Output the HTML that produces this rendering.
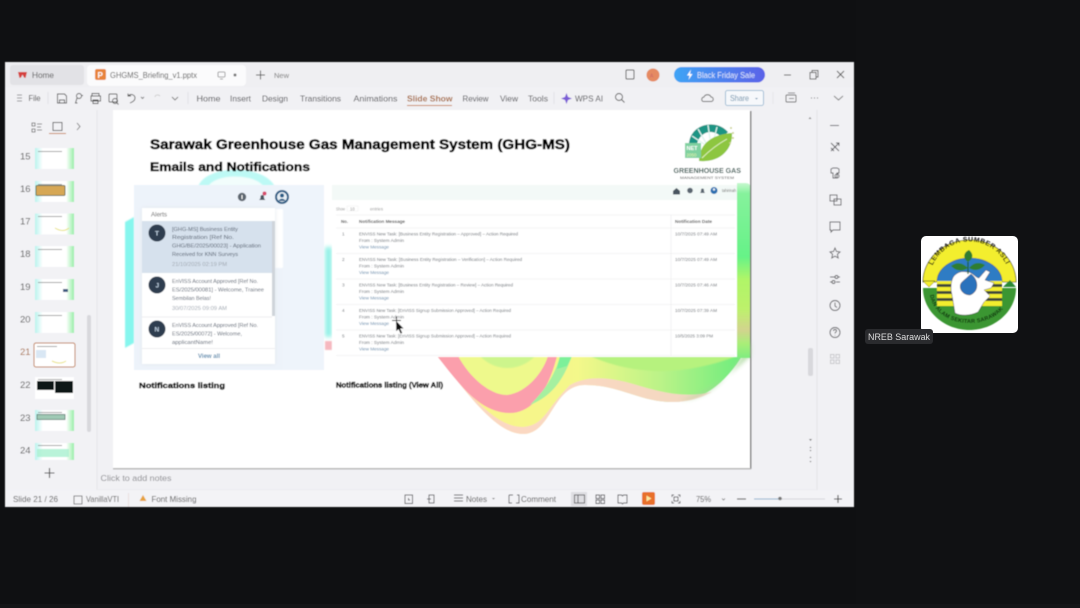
<!DOCTYPE html>
<html><head><meta charset="utf-8"><title>GHGMS Briefing</title>
<style>html,body{margin:0;padding:0;background:#0f1012;overflow:hidden}svg{display:block}text{font-family:"Liberation Sans",sans-serif}</style></head>
<body>
<svg width="1080" height="608" viewBox="0 0 1080 608" xmlns="http://www.w3.org/2000/svg">
<defs>
<filter id="b" x="-5%" y="-5%" width="110%" height="110%"><feGaussianBlur stdDeviation="0.42"/></filter>
<filter id="b2" x="-10%" y="-10%" width="120%" height="120%"><feGaussianBlur stdDeviation="2"/></filter>
<linearGradient id="sale" x1="0" x2="1"><stop offset="0" stop-color="#3fa4f5"/><stop offset="1" stop-color="#5b62e8"/></linearGradient>
<linearGradient id="wave" x1="0" x2="1"><stop offset="0" stop-color="#fbf28c"/><stop offset=".45" stop-color="#f4f88a"/><stop offset=".72" stop-color="#b9f388"/><stop offset="1" stop-color="#66ec7c"/></linearGradient>
<linearGradient id="strip" x1="0" x2="0" y1="0" y2="1"><stop offset="0" stop-color="#c8f8d0"/><stop offset=".06" stop-color="#86f29c"/><stop offset=".42" stop-color="#66f388"/><stop offset=".55" stop-color="#b0f568"/><stop offset=".72" stop-color="#bdf16c"/><stop offset=".84" stop-color="#d2d48e"/><stop offset=".92" stop-color="#a8ee78"/><stop offset="1" stop-color="#7fec80"/></linearGradient>
<linearGradient id="th" x1="0" x2="1"><stop offset="0" stop-color="#b9f3ee"/><stop offset=".2" stop-color="#fff"/><stop offset=".8" stop-color="#fff"/><stop offset="1" stop-color="#98eea8"/></linearGradient>
<path id="topArc" d="M929 282 A40.500 40.500 0 0 1 1010 282"/>
<path id="botArc" d="M930 293 A39.500 30 0 0 0 1009 293"/>
</defs>
<rect width="1080" height="608" fill="#0f1012"/>
<rect x="856" y="0" width="224" height="608" fill="#101113"/>
<rect x="0" y="604" width="1080" height="4" fill="#141517"/>
<g filter="url(#b)">
<!-- window -->
<rect x="5" y="62" width="849" height="445" fill="#f1f1f4"/>
<rect x="5" y="62" width="849" height="25" fill="#efeff2"/>
<rect x="10" y="65" width="74" height="20" rx="3" fill="#e2e2e6"/>
<rect x="87" y="65" width="159" height="21" rx="4" fill="#fbfbfc"/>
<path d="M18 72h9l-1.500 6-1.500-.5-1.500-3-1.500 3-1.500.5z" fill="#d5413c"/>
<text x="32" y="78" font-size="8.500" fill="#555" textLength="22" lengthAdjust="spacingAndGlyphs">Home</text>
<rect x="95" y="69" width="11" height="11" rx="2" fill="#e8843a"/>
<text x="97.500" y="78" font-size="8" fill="#fff" font-weight="bold">P</text>
<text x="110" y="78" font-size="8.500" fill="#555" textLength="87" lengthAdjust="spacingAndGlyphs">GHGMS_Briefing_v1.pptx</text>
<rect x="218" y="72" width="7" height="5" rx="1" fill="none" stroke="#888" stroke-width=".8"/><path d="M220 79h3" stroke="#888" stroke-width=".8"/>
<circle cx="235" cy="75" r="1.500" fill="#777"/>
<path d="M256 75h9M260.500 70.500v9" stroke="#555" stroke-width="1"/>
<text x="274" y="78" font-size="7.500" fill="#777" textLength="15" lengthAdjust="spacingAndGlyphs">New</text>
<rect x="626" y="70" width="8" height="9" rx="1" fill="none" stroke="#555" stroke-width="1"/>
<circle cx="653" cy="75" r="6.500" fill="#e58a62"/>
<text x="650" y="77.500" font-size="5" fill="#c66">A</text>
<rect x="674" y="67" width="91" height="15.500" rx="7.700" fill="url(#sale)"/>
<path d="M691 69.500l-4 6h2.500l-1 4.500 4-6h-2.500z" fill="#fff"/>
<text x="697" y="78" font-size="8" fill="#dfe7fb" textLength="58" lengthAdjust="spacingAndGlyphs">Black Friday Sale</text>
<path d="M784 75h7" stroke="#555" stroke-width="1"/>
<rect x="810" y="72.500" width="6" height="6.500" fill="none" stroke="#555" stroke-width=".9"/><path d="M812 72.500v-2h6v6.500h-2" fill="none" stroke="#555" stroke-width=".9"/>
<path d="M837 71l7 7M844 71l-7 7" stroke="#555" stroke-width=".9"/>
<!-- ribbon -->
<path d="M17 95h5M17 98h5M17 101h5" stroke="#777" stroke-width=".8"/>
<text x="28.500" y="101" font-size="8" fill="#444" textLength="12" lengthAdjust="spacingAndGlyphs">File</text>
<path d="M48 92v12" stroke="#e2e2e5"/>
<g fill="none" stroke="#555" stroke-width=".9">
<path d="M57.500 94h7l2 2v7h-9zM59.500 103v-3h5v3"/>
<circle cx="79" cy="96" r="2.500"/><path d="M77 98l-1.500 5h2M81 95.500h2"/>
<path d="M92 96v-2.500h7v2.500M91 96h9.500v5H91zM93 100h5v3.500h-5z"/>
<rect x="109" y="94" width="8" height="8" rx="1"/><circle cx="115" cy="101" r="2.500"/><path d="M117 103l1.500 1.500"/>
<path d="M128 96c3-3 7-1 7 2s-3 4-5 5M128 93.500V96h3"/>
<path d="M141 97l1.500 1.500L144 97" stroke="#777"/>
<path d="M160 96c-2-2-5-1-5 1" stroke="#ccc"/>
<path d="M172 97l3 3 3-3" stroke="#777"/>
</g>
<path d="M188 92v12" stroke="#e2e2e5"/>
<g font-size="8.700" fill="#4b4b4f">
<text x="196.500" y="101.500" textLength="24" lengthAdjust="spacingAndGlyphs">Home</text>
<text x="230" y="101.500" textLength="21" lengthAdjust="spacingAndGlyphs">Insert</text>
<text x="262" y="101.500" textLength="26" lengthAdjust="spacingAndGlyphs">Design</text>
<text x="300" y="101.500" textLength="41" lengthAdjust="spacingAndGlyphs">Transitions</text>
<text x="353.500" y="101.500" textLength="44" lengthAdjust="spacingAndGlyphs">Animations</text>
<text x="407" y="101.500" textLength="45.500" lengthAdjust="spacingAndGlyphs" font-weight="bold" fill="#a86a3c">Slide Show</text>
<text x="462.500" y="101.500" textLength="26" lengthAdjust="spacingAndGlyphs">Review</text>
<text x="500" y="101.500" textLength="18" lengthAdjust="spacingAndGlyphs">View</text>
<text x="528" y="101.500" textLength="20" lengthAdjust="spacingAndGlyphs">Tools</text>
<text x="575" y="101.500" textLength="28" lengthAdjust="spacingAndGlyphs">WPS AI</text>
</g>
<rect x="407" y="105" width="45" height="1" fill="#c98554"/>
<path d="M554 92v12" stroke="#e2e2e5"/>
<path d="M566.500 93l1.500 4 4 1.500-4 1.500-1.500 4-1.500-4-4-1.500 4-1.500z" fill="#7a5bd6"/>
<circle cx="619" cy="97" r="3.500" fill="none" stroke="#555" stroke-width=".9"/><path d="M621.500 99.500l3 3" stroke="#555" stroke-width=".9"/>
<path d="M704 101.500h7c3 0 3-4.500 0-4.500-1-3-6-3-7 0-3 .5-3 4.500 0 4.500z" fill="none" stroke="#666" stroke-width=".9"/>
<rect x="725.500" y="90.500" width="38" height="15" rx="2" fill="#f6f8fb" stroke="#8ab0cc" stroke-width=".8"/>
<text x="730" y="101" font-size="8" fill="#6f93ad" textLength="19" lengthAdjust="spacingAndGlyphs">Share</text>
<path d="M755 98h3l-1.500 1.500z" fill="#6f93ad"/>
<path d="M773 92v12" stroke="#e6e6e9"/>
<rect x="786" y="95" width="10" height="7" rx="1" fill="none" stroke="#666" stroke-width=".9"/><path d="M788 93h7M789 98.500h5" stroke="#666" stroke-width=".8"/>
<path d="M811 98h1M814 98h1M817 98h1" stroke="#555" stroke-width="1"/>
<path d="M834 96l4.500 4 4.500-4" fill="none" stroke="#777" stroke-width=".9"/>
<!-- left pane -->
<rect x="5" y="110" width="92" height="380" fill="#f2f2f5"/>
<path d="M97 110v380" stroke="#e6e6e9"/>
<g fill="none" stroke="#666" stroke-width=".8"><path d="M32 123h3v3h-3zM32 129h3v3h-3zM37 124h5M37 127h4M37 130h5"/></g>
<rect x="53" y="122.500" width="9" height="8" fill="none" stroke="#555" stroke-width=".9"/>
<rect x="49" y="133" width="17" height="1" fill="#c98554"/>
<path d="M77 123l3 3.500-3 3.500" fill="none" stroke="#777" stroke-width=".9"/>
<g font-size="9.500" fill="#555">
<text x="20" y="159.500">15</text><text x="20" y="192">16</text><text x="20" y="224.500">17</text><text x="20" y="257">18</text><text x="20" y="290">19</text><text x="20" y="322.500">20</text><text x="20" y="355" fill="#a86a3c">21</text><text x="20" y="388">22</text><text x="20" y="421">23</text><text x="20" y="453.500">24</text>
</g>
<g>
<rect x="35" y="148" width="39" height="21" fill="url(#th)"/>
<rect x="35" y="181" width="39" height="21" fill="url(#th)"/><rect x="36" y="185.500" width="29" height="10" rx="1" fill="#d6a754" stroke="#4a5a48" stroke-width=".8"/>
<rect x="35" y="213.500" width="39" height="21" fill="url(#th)"/><path d="M55 228q8 5 14 0" stroke="#e8e27a" fill="none"/>
<rect x="35" y="246" width="39" height="21" fill="url(#th)"/>
<rect x="35" y="279" width="39" height="21" fill="url(#th)"/><rect x="63" y="289" width="5" height="3" fill="#3c5a80"/>
<rect x="35" y="312" width="39" height="21" fill="url(#th)"/>
<rect x="34" y="343" width="41" height="24" rx="2" fill="#fff" stroke="#c07a48" stroke-width="1"/><rect x="36" y="350" width="10" height="8" fill="#d9e7f4"/><path d="M52 361q8 4 14 0" stroke="#e8e27a" fill="none"/>
<rect x="35" y="377" width="39" height="22" fill="#fff"/><rect x="37" y="381" width="17" height="9" fill="#0c1416"/><rect x="55" y="381" width="18" height="12" fill="#0c1416"/>
<rect x="35" y="410" width="39" height="21" fill="url(#th)"/><rect x="37" y="414.500" width="28" height="5" fill="#9fc9b4" stroke="#4a6a5e" stroke-width=".7"/>
<rect x="35" y="443" width="39" height="17" fill="url(#th)"/><rect x="37" y="449" width="32" height="8" fill="#a8f0d0" opacity=".8"/>
</g>
<g fill="#333" font-size="6" opacity=".45"><rect x="38" y="151" width="24" height="1"/><rect x="38" y="184" width="24" height="1"/><rect x="38" y="216" width="24" height="1"/><rect x="38" y="249" width="24" height="1"/><rect x="38" y="282" width="24" height="1"/><rect x="38" y="315" width="24" height="1"/><rect x="37" y="346" width="20" height="1"/><rect x="38" y="379" width="24" height="1"/><rect x="38" y="412" width="24" height="1"/><rect x="38" y="445" width="24" height="1"/></g>
<rect x="87" y="315" width="4" height="117" rx="2" fill="#d8d8dc"/>
<path d="M44.500 473h10M49.500 468v10" stroke="#444" stroke-width="1.100"/>
<!-- right -->
<path d="M817 110v380" stroke="#e3e3e7"/>
<path d="M810 117l1.500 2h-3z" fill="#888"/>
<rect x="808" y="348" width="5" height="28" rx="2" fill="#d8d8dc"/>
<path d="M809 439h3l-1.500 2zM809.500 448l1-1.500 1 1.500zM809.500 450l1 1.500 1-1.500zM809.500 458l1-1.500 1 1.500zM809.500 461l1 1.500 1-1.500z" fill="#777"/>
<g fill="none" stroke="#5a5a5e" stroke-width=".9">
<path d="M830 125.500h9"/>
<path d="M831 143l8 8M839 143l-8 8M836 143h3v3M831 148l3 3"/>
<path d="M831 169l2-1h4l2 1v4h-2v5h-4v-5h-2z"/><circle cx="837" cy="176" r="2"/>
<rect x="830" y="195" width="7" height="6"/><rect x="834" y="199" width="7" height="6"/>
<path d="M830 222h10v8h-7l-2 2v-2h-1z"/>
<path d="M835 248l1.500 3.500 3.500.4-2.600 2.400.8 3.700-3.200-1.900-3.200 1.900.8-3.700-2.600-2.400 3.500-.4z"/>
<path d="M830 277h5M838 277h2M830 282h2M836 282h4"/><circle cx="836.500" cy="277" r="1.500"/><circle cx="833.500" cy="282" r="1.500"/>
<circle cx="835" cy="305.500" r="5"/><path d="M835 302.500v3.500l2 1.500"/>
<circle cx="835" cy="332.500" r="5"/><path d="M833.500 331c0-2 3-2 3 0 0 1-1.500 1-1.500 2.500M835 335v.5"/>
<g stroke="#c5c5c9"><rect x="830.500" y="354.500" width="3.500" height="3.500"/><rect x="836" y="354.500" width="3.500" height="3.500"/><rect x="830.500" y="360" width="3.500" height="3.500"/><rect x="836" y="360" width="3.500" height="3.500"/></g>
</g>
<!-- notes -->
<text x="100.500" y="481" font-size="8.700" fill="#8a8a8e" textLength="71" lengthAdjust="spacingAndGlyphs">Click to add notes</text>
<path d="M97 490h720" stroke="#e8e8eb"/>
<!-- status -->
<rect x="5" y="490" width="849" height="17" fill="#f3f3f6"/>
<g font-size="8.500" fill="#555">
<text x="13" y="502" textLength="45" lengthAdjust="spacingAndGlyphs">Slide 21 / 26</text>
<text x="86" y="502" textLength="33" lengthAdjust="spacingAndGlyphs">VanillaVTI</text>
<text x="151.500" y="502" textLength="45" lengthAdjust="spacingAndGlyphs">Font Missing</text>
<text x="466" y="502" textLength="21" lengthAdjust="spacingAndGlyphs">Notes</text>
<text x="521" y="502" textLength="35" lengthAdjust="spacingAndGlyphs">Comment</text>
<text x="696" y="502" textLength="15" lengthAdjust="spacingAndGlyphs">75%</text>
</g>
<path d="M74 496h8v8h-8z" fill="none" stroke="#666" stroke-width=".8"/>
<path d="M128.500 493v14" stroke="#eadfdf"/>
<path d="M143 495l3.500 6h-7z" fill="#e6a23c"/>
<g fill="none" stroke="#5a5a5e" stroke-width=".9">
<rect x="405" y="495" width="7.500" height="8.500"/><path d="M408.500 498v2h1.500"/>
<rect x="429" y="495" width="5" height="8"/><path d="M427 499h4"/>
<path d="M454 495h9M454 498h9M454 501h9"/>
<path d="M509 495h4M509 495v8h3M516 503h3v-8h-2"/>
<path d="M596 495h3.500v3.500H596zM601 495h3.500v3.500H601zM596 500h3.500v3.500H596zM601 500h3.500v3.500H601z"/>
<path d="M618 495h3.500l1 1 1-1h3.500v8h-3.500l-1 1-1-1H618z"/>
<path d="M672 497v-2h2M678 495h2v2M680 501v2h-2M674 503h-2v-2"/><rect x="674" y="497" width="4" height="4"/>
</g>
<rect x="571" y="492" width="16" height="14" fill="#dedee2"/>
<rect x="574.500" y="495" width="10" height="8" fill="none" stroke="#5a5a5e" stroke-width=".9"/><path d="M578 495v8" stroke="#5a5a5e" stroke-width=".9"/>
<path d="M492 498h3l-1.500 1.500z" fill="#777"/>
<path d="M722 498.500l1.500 1.500 1.500-1.500" fill="none" stroke="#777" stroke-width=".8"/>
<rect x="642" y="492" width="13" height="13" rx="2" fill="#e8702c"/>
<path d="M646.500 495.500l5 3-5 3z" fill="#fbe9a0"/>
<path d="M737 499h9" stroke="#555" stroke-width="1.100"/>
<path d="M754 499h26" stroke="#8fb3cf" stroke-width="1"/><path d="M780 499h45" stroke="#d5d5d9" stroke-width="1"/>
<circle cx="780" cy="498.500" r="1.800" fill="#777"/>
<path d="M834 499h8M838 495v8" stroke="#444" stroke-width="1.100"/>
<!-- slide -->
<rect x="750" y="111" width="1.500" height="358" fill="#7d7d7d"/>
<rect x="113" y="468" width="638" height="1.500" fill="#b8b8b8"/>
<rect x="113" y="110" width="637" height="358" fill="#fff"/>
<!-- background decor -->
<path d="M198 187C205 164 265 164 275 187z" fill="#bdf9f5" filter="url(#b)"/>
<path d="M208 187C214 173 256 173 264 187z" fill="#f2fdfc" filter="url(#b)"/>
<path d="M134 217l-9 5v126l9-5z" fill="#86f6ee" filter="url(#b)"/>
<rect x="325" y="247" width="7" height="90" fill="#8ff0e6" filter="url(#b2)"/>
<rect x="325" y="341" width="7" height="9" fill="#f6b8bf" filter="url(#b)"/>
<!-- waves -->
<path d="M437 355C465 390 495 434 523 434 552 434 552 385 585 385 620 385 640 402 672 402 710 402 735 372 750 342V355z" fill="url(#wave)"/>
<path d="M437 355C465 390 495 434 523 434 552 434 552 385 585 385 620 385 640 402 672 402 690 402 700 398 712 392 690 397 670 395 640 386 615 378 590 374 570 385 545 410 545 425 523 427 495 427 470 395 437 355z" fill="#fbd5c8" opacity=".9"/>
<path d="M437 356C460 385 480 413 510 413 535 413 550 385 557 356z" fill="#fb9fac"/>
<path d="M458 356C470 378 490 395 507 395 525 393 542 375 548 356z" fill="#eef98c"/>
<path d="M480 356C495 372 520 372 535 356z" fill="#cdf58c" filter="url(#b)"/>
<path d="M530 405C555 395 565 375 572 356H560C555 375 545 390 530 405z" fill="#a5f0a0"/>
<path d="M590 356C640 378 690 374 737 356z" fill="#b6f27e" filter="url(#b)"/>
<path d="M680 400C710 400 735 372 750 342V356C730 375 705 395 680 400z" fill="#a6d596" opacity=".8" filter="url(#b2)"/>
<path d="M560 356h12l-5 10-10 3z" fill="#7cf09a"/>
<path d="M737 183h8c3 0 5 1 5 3V358h-13z" fill="url(#strip)"/>
<!-- title -->
<text x="150" y="149" font-size="14" font-weight="bold" fill="#000" stroke="#000" stroke-width=".55" textLength="420" lengthAdjust="spacingAndGlyphs">Sarawak Greenhouse Gas Management System (GHG-MS)</text>
<text x="150" y="171" font-size="12" font-weight="bold" fill="#000" stroke="#000" stroke-width=".5" textLength="160" lengthAdjust="spacingAndGlyphs">Emails and Notifications</text>
<!-- ghg logo -->
<g>
<path d="M689 144C690 124 716 118 728 132L722 138C714 128 700 131 697 144z" fill="#1f9484"/>
<path d="M692 136l12 8M698 129l8 14M708 125l2 14M717 127l-3 12" stroke="#dff4ef" stroke-width="1.300" fill="none"/>
<path d="M699 161C699 142 715 134 732 133 733 150 719 163 699 161z" fill="#8dc63f"/>
<path d="M702 158C710 150 718 144 727 139" stroke="#e2f1c2" stroke-width="1" fill="none"/>
<rect x="685" y="143" width="16" height="15" fill="#7fd1a0"/>
<text x="686.500" y="150" font-size="5.500" font-weight="bold" fill="#fff">NET</text>
<text x="686.500" y="156.500" font-size="4.500" fill="#e9f6ae">2050</text>
<g fill="#c9cf8a"><circle cx="731" cy="128" r="1"/><circle cx="733" cy="133" r="1"/><circle cx="733" cy="138" r="1"/><circle cx="730" cy="143" r="1"/></g>
<text x="673.500" y="173" font-size="7.200" font-weight="bold" fill="#33564f" textLength="67.500" lengthAdjust="spacingAndGlyphs">GREENHOUSE GAS</text>
<text x="680" y="179" font-size="3.800" fill="#555" textLength="54" lengthAdjust="spacingAndGlyphs">MANAGEMENT SYSTEM</text>
</g>
<!-- alerts panel -->
<rect x="134" y="185" width="190" height="185" fill="#edf3fa"/>
<rect x="283" y="185" width="41" height="185" fill="#eef4fb"/>
<circle cx="242" cy="197" r="4.200" fill="#5d6670"/><rect x="241.500" y="195" width="1" height="4" fill="#fff"/>
<path d="M259 200c1.500-1 1.500-2 1.500-3.500 0-2 3.500-2 3.500 0 0 1.500 0 2.500 1.500 3.500z" fill="#4a5560"/>
<circle cx="264.500" cy="193.500" r="2" fill="#d64a6a"/>
<circle cx="282" cy="197" r="7" fill="#2c5d85"/><circle cx="282" cy="197" r="5" fill="#e8f0f6"/><circle cx="282" cy="195.500" r="2" fill="#2c5d85"/><path d="M278.500 201c1-3 6-3 7 0" fill="#2c5d85"/>
<rect x="143" y="209" width="140" height="59" rx="1" fill="#fff" filter="url(#b)"/>
<rect x="142" y="208" width="133" height="156" rx="1" fill="#e3e8ee" filter="url(#b2)"/>
<rect x="142" y="208" width="133" height="156" fill="#fff"/>
<text x="151" y="216.500" font-size="6" fill="#555" textLength="16" lengthAdjust="spacingAndGlyphs">Alerts</text>
<rect x="142" y="221" width="130" height="52" fill="#d6e1ed"/>
<rect x="272" y="221" width="3" height="95" fill="#cfd4da"/>
<path d="M142 317h130M142 348.500h133" stroke="#e8e8ea" stroke-width=".7"/>
<circle cx="157" cy="233" r="8.500" fill="#2e3d50"/><text x="155" y="235.500" font-size="6.500" font-weight="bold" fill="#bcd">T</text>
<circle cx="157" cy="285" r="8.500" fill="#2e3d50"/><text x="155.500" y="287.500" font-size="6.500" font-weight="bold" fill="#bcd">J</text>
<circle cx="157" cy="329" r="8.500" fill="#2e3d50"/><text x="154.500" y="331.500" font-size="6.500" font-weight="bold" fill="#bcd">N</text>
<g font-size="5.700" fill="#566070">
<text x="172" y="231" textLength="66" lengthAdjust="spacingAndGlyphs">[GHG-MS] Business Entity</text>
<text x="172" y="239" textLength="62" lengthAdjust="spacingAndGlyphs">Registration [Ref No.</text>
<text x="172" y="247.500" textLength="89" lengthAdjust="spacingAndGlyphs">GHG/BE/2025/00023] - Application</text>
<text x="172" y="256" textLength="66" lengthAdjust="spacingAndGlyphs">Received for KNN Surveys</text>
<text x="172" y="283" textLength="86" lengthAdjust="spacingAndGlyphs">EnVISS Account Approved [Ref No.</text>
<text x="172" y="291.500" textLength="92" lengthAdjust="spacingAndGlyphs">ES/2025/00081] - Welcome, Trainee</text>
<text x="172" y="300" textLength="39" lengthAdjust="spacingAndGlyphs">Sembilan Belas!</text>
<text x="172" y="327" textLength="86" lengthAdjust="spacingAndGlyphs">EnVISS Account Approved [Ref No.</text>
<text x="172" y="335.500" textLength="70" lengthAdjust="spacingAndGlyphs">ES/2025/00072] - Welcome,</text>
<text x="172" y="344" textLength="41" lengthAdjust="spacingAndGlyphs">applicantName!</text>
</g>
<g font-size="5.200" fill="#a0a8b2">
<text x="172" y="266" textLength="55" lengthAdjust="spacingAndGlyphs">21/10/2025 02:19 PM</text>
<text x="172" y="310" textLength="55" lengthAdjust="spacingAndGlyphs">30/07/2025 09:09 AM</text>
</g>
<text x="198" y="358" font-size="6.800" fill="#5b8db0" font-weight="bold" textLength="22" lengthAdjust="spacingAndGlyphs">View all</text>
<text x="139" y="388" font-size="7.500" font-weight="bold" fill="#000" stroke="#000" stroke-width=".4" textLength="86" lengthAdjust="spacingAndGlyphs">Notifications listing</text>
<!-- table panel -->
<rect x="332" y="185" width="405" height="172" fill="#fff"/>
<rect x="332" y="185" width="405" height="15" fill="#f3f9f7"/>
<path d="M673 191l3.500-3 3.500 3v3.500h-7z" fill="#4a5560"/>
<circle cx="690" cy="190.500" r="2.800" fill="#5a6570"/>
<path d="M700 193c1-1 1-2 1-3 0-2 3-2 3 0 0 1 0 2 1 3z" fill="#5a6570"/>
<circle cx="714" cy="190.500" r="3.500" fill="#2c70b0"/>
<circle cx="714" cy="189.500" r="1.200" fill="#e8f0f6"/>
<text x="722" y="192" font-size="4.300" fill="#777" textLength="14" lengthAdjust="spacingAndGlyphs">tahirinah</text>
<text x="336" y="210.500" font-size="4.200" fill="#999" textLength="9" lengthAdjust="spacingAndGlyphs">Show</text>
<rect x="347" y="206" width="11" height="5" fill="#fff" stroke="#eee" stroke-width=".5"/><text x="350" y="210.500" font-size="4.200" fill="#888">10</text>
<text x="370" y="210.500" font-size="4.200" fill="#999" textLength="13" lengthAdjust="spacingAndGlyphs">entries</text>
<g stroke="#e9eaec" stroke-width=".6">
<path d="M336 215H735M336 228H735M336 253.500H735M336 279H735M336 304.500H735M336 330H735M336 355.500H735M671 215V355.500"/>
</g>
<g font-size="4.800" font-weight="bold" fill="#555">
<text x="341" y="222.800" textLength="7" lengthAdjust="spacingAndGlyphs">No.</text>
<text x="359" y="222.800" textLength="46" lengthAdjust="spacingAndGlyphs">Notification Message</text>
<text x="675" y="222.800" textLength="37" lengthAdjust="spacingAndGlyphs">Notification Date</text>
</g>
<g font-size="4.700" fill="#6d7278">
<text x="342" y="235.500">1</text><text x="342" y="261">2</text><text x="342" y="286.500">3</text><text x="342" y="312">4</text><text x="342" y="337.500">5</text>
<text x="359" y="235.500" textLength="159" lengthAdjust="spacingAndGlyphs">ENVISS New Task: [Business Entity Registration – Approved] – Action Required</text>
<text x="359" y="261" textLength="163" lengthAdjust="spacingAndGlyphs">ENVISS New Task: [Business Entity Registration – Verification] – Action Required</text>
<text x="359" y="286.500" textLength="154" lengthAdjust="spacingAndGlyphs">ENVISS New Task: [Business Entity Registration – Review] – Action Required</text>
<text x="359" y="312" textLength="152" lengthAdjust="spacingAndGlyphs">ENVISS New Task: [EnVISS Signup Submission Approved] – Action Required</text>
<text x="359" y="337.500" textLength="152" lengthAdjust="spacingAndGlyphs">ENVISS New Task: [EnVISS Signup Submission Approved] – Action Required</text>
<text x="359" y="242" textLength="45" lengthAdjust="spacingAndGlyphs">From : System Admin</text>
<text x="359" y="267.500" textLength="45" lengthAdjust="spacingAndGlyphs">From : System Admin</text>
<text x="359" y="293" textLength="45" lengthAdjust="spacingAndGlyphs">From : System Admin</text>
<text x="359" y="318.500" textLength="45" lengthAdjust="spacingAndGlyphs">From : System Admin</text>
<text x="359" y="344" textLength="45" lengthAdjust="spacingAndGlyphs">From : System Admin</text>
<text x="675" y="235.500" textLength="42" lengthAdjust="spacingAndGlyphs">10/7/2025 07:49 AM</text>
<text x="675" y="261" textLength="42" lengthAdjust="spacingAndGlyphs">10/7/2025 07:49 AM</text>
<text x="675" y="286.500" textLength="42" lengthAdjust="spacingAndGlyphs">10/7/2025 07:46 AM</text>
<text x="675" y="312" textLength="42" lengthAdjust="spacingAndGlyphs">10/7/2025 07:39 AM</text>
<text x="675" y="337.500" textLength="38" lengthAdjust="spacingAndGlyphs">10/5/2025 3:09 PM</text>
</g>
<g font-size="4.700" fill="#6b8fae">
<text x="359" y="248.500" textLength="30" lengthAdjust="spacingAndGlyphs">View Message</text>
<text x="359" y="274" textLength="30" lengthAdjust="spacingAndGlyphs">View Message</text>
<text x="359" y="299.500" textLength="30" lengthAdjust="spacingAndGlyphs">View Message</text>
<text x="359" y="325" textLength="30" lengthAdjust="spacingAndGlyphs">View Message</text>
<text x="359" y="350.500" textLength="30" lengthAdjust="spacingAndGlyphs">View Message</text>
</g>
<text x="336" y="387.500" font-size="7.500" font-weight="bold" fill="#000" stroke="#000" stroke-width=".4" textLength="107" lengthAdjust="spacingAndGlyphs">Notifications listing (View All)</text>
<!-- cursor -->
<path d="M396 320.500l0 11 2.500-2 2 4.500 2-1-2-4.200h3.500z" fill="#111" stroke="#fff" stroke-width=".5"/>
<path d="M392 320.500h9M396.500 316.500v8" stroke="#111" stroke-width="1"/>
</g>
<!-- NREB logo -->
<rect x="921" y="236" width="97" height="97" rx="5" fill="#fff"/>
<g filter="url(#b)">
<path d="M923 282A46.500 42 0 0 1 1016 282H1002A32.500 24 0 0 0 937 282z" fill="#f3ee2f" stroke="#222" stroke-width=".6"/>
<path d="M937 282A32.500 24 0 0 1 1002 282z" fill="#2f7cc4"/>
<path d="M923 288H937V305H1002V288H1016C1016 312 994 330 969.500 330 945 330 923 312 923 288z" fill="#3a9632"/>
<path d="M923 281h12l-6 6z" fill="#f3ee2f" stroke="#222" stroke-width=".5"/>
<path d="M1003 287l7-7 6 7z" fill="#2a8a36"/>
<g><rect x="937" y="281" width="23" height="25" fill="#f3ee2f"/><rect x="979" y="281" width="23" height="25" fill="#f3ee2f"/>
<rect x="937" y="284" width="23" height="3" fill="#3f4a3a"/><rect x="937" y="291" width="23" height="3" fill="#3f4a3a"/><rect x="937" y="298" width="23" height="3" fill="#3f4a3a"/><rect x="979" y="284" width="23" height="3" fill="#3f4a3a"/><rect x="979" y="291" width="23" height="3" fill="#3f4a3a"/><rect x="979" y="298" width="23" height="3" fill="#3f4a3a"/></g>
<path d="M954 276C960 270 964 272 968 272 972 272 976 278 979 278L986 270 990 272 985 280 994 283 991 288 984 290 990 296 984 302 978 312C970 316 960 316 955 313L952 295C950 288 951 280 954 276z" fill="#fff" stroke="#222" stroke-width=".4"/>
<path d="M971 274C979 280 979 292 970 295 961 295 958 286 962 282z" fill="#2a72bc" stroke="#222" stroke-width=".4"/>
<path d="M968 274V262" stroke="#1f5e20" stroke-width="1.200"/>
<path d="M968 262C962 258 964 252 969 250 974 254 973 259 968 262z" fill="#2f7d33"/>
<path d="M968 268C962 262 956 262 951 266 956 271 962 272 968 268zM969 268C974 262 980 262 985 265 980 271 974 271 969 268z" fill="#2f7d33"/>
<text font-size="6.800" font-weight="bold" fill="#111" letter-spacing=".5"><textPath href="#topArc" startOffset="17">LEMBAGA SUMBER ASLI</textPath></text>
<text font-size="5.600" font-weight="bold" fill="#10300e" letter-spacing=".2"><textPath href="#botArc" startOffset="2">DAN ALAM SEKITAR SARAWAK</textPath></text>
</g>
<rect x="865" y="329" width="68" height="15" rx="3" fill="#2a2b2e"/>
<text x="868" y="340" font-size="9.500" fill="#dedede" textLength="62" lengthAdjust="spacingAndGlyphs">NREB Sarawak</text>
</svg>
</body></html>
